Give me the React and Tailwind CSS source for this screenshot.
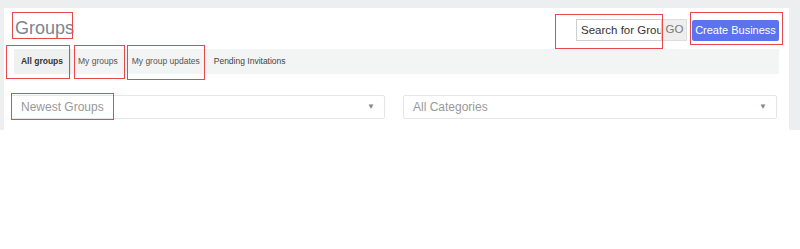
export default function App() {
  const font = { fontFamily: '"Liberation Sans", Arial, sans-serif' };
  return (
    <div className="relative w-[800px] h-[249px] bg-white overflow-hidden" style={font}>
      <div className="bg-[#eceeef] pt-2 pl-1 pr-[11px]">
        <div className="bg-white h-[122px] flex flex-col">
          {/* header row */}
          <div className="flex items-start h-[41px]">
            <div className="pl-[11px] pt-[9px] text-[18px] leading-[22px] text-[#7b8590]">Groups</div>
            <div className="ml-auto flex items-center pt-[11px] pr-[10px] shrink-0">
              <input
                readOnly
                placeholder="Search for Groups"
                className="shrink-0 w-[86px] h-[22px] border border-[#cfcfcf] pl-[4px] text-[11.5px] text-[#333] placeholder:text-[#333] outline-none"
                style={font}
              />
              <div className="shrink-0 w-[25px] h-[22px] bg-[#eeeeee] border border-[#dddddd] flex items-center justify-center text-[11.5px] text-[#777]">GO</div>
              <div className="shrink-0 ml-[5px] w-[87px] h-[21px] bg-[#5b73ef] rounded-[2px] flex items-center justify-center whitespace-nowrap text-[11px] text-white">Create Business</div>
            </div>
          </div>
          {/* tabs */}
          <div className="ml-[10px] mr-[10px] h-[25px] bg-[#f3f4f4] flex items-stretch text-[8.5px] whitespace-nowrap">
            <div className="w-[57px] bg-[#eff1f1] border-r border-[#e2e4e4] flex items-center justify-center font-bold text-[#333]">All groups</div>
            <div className="px-[7px] flex items-center text-[#555]">My groups</div>
            <div className="px-[7px] flex items-center text-[#555]">My group updates</div>
            <div className="px-[7px] flex items-center text-[#444]">Pending Invitations</div>
          </div>
          {/* selects */}
          <div className="mt-[21px] pl-[7px] pr-[12px] flex gap-[18px]">
            <div className="flex-1 h-[24px] border border-[#e6e6e6] rounded-[2px] flex items-center px-[9px] text-[12px] text-[#999]">
              <span>Newest Groups</span>
              <span className="ml-auto text-[8px] text-[#888]">▼</span>
            </div>
            <div className="flex-1 h-[24px] border border-[#e6e6e6] rounded-[2px] flex items-center px-[9px] text-[12px] text-[#999]">
              <span>All Categories</span>
              <span className="ml-auto text-[8px] text-[#888]">▼</span>
            </div>
          </div>
        </div>
      </div>
      {/* annotation boxes */}
      <div className="absolute z-10 left-[12px] top-[12px] w-[61px] h-[27px] border border-[#e8474d]" />
      <div className="absolute z-10 left-[6px] top-[45px] w-[64px] h-[34px] border border-[#e8474d]" />
      <div className="absolute z-10 left-[74px] top-[45px] w-[51px] h-[34px] border border-[#e8474d]" />
      <div className="absolute z-10 left-[127px] top-[45px] w-[78px] h-[35px] border border-[#e8474d]" />
      <div className="absolute z-10 left-[11px] top-[93px] w-[103px] h-[27px] border border-[#e8474d]" />
      <div className="absolute z-10 left-[555px] top-[14px] w-[108px] h-[35px] border border-[#e8474d]" />
      <div className="absolute z-10 left-[690px] top-[12px] w-[93px] h-[33px] border border-[#e8474d]" />
    </div>
  );
}
